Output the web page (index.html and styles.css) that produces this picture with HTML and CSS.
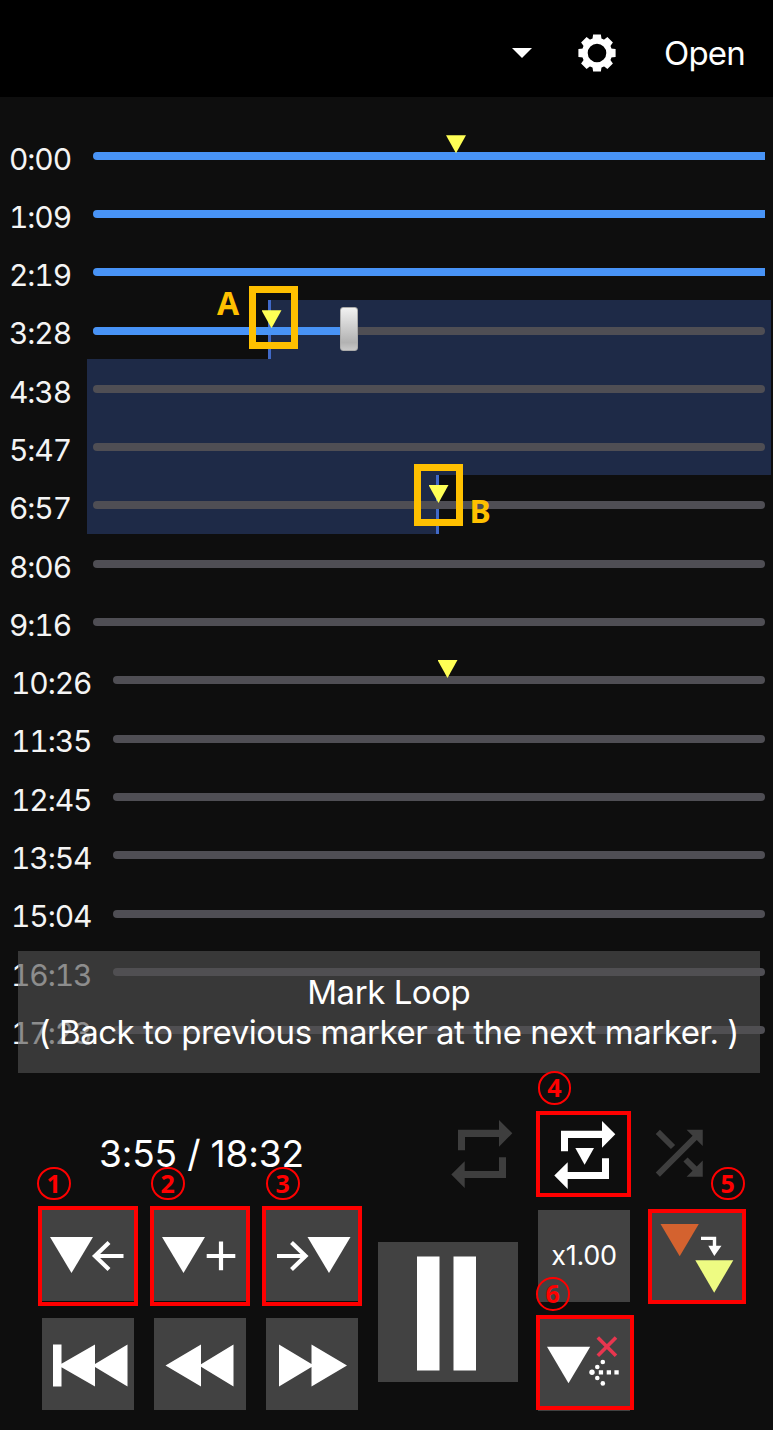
FILE: index.html
```
<!DOCTYPE html>
<html lang="en">
<head>
<meta charset="utf-8">
<title>Mark Loop</title>
<link rel="stylesheet" href="styles.css">
</head>
<body>
<header class="topbar">
  <svg class="caret" viewBox="0 0 20 10"><path d="M0 0H20L10 10Z"/></svg>
  <svg class="gear" viewBox="-19 -19 38 38">
    <circle r="12.2" fill="none" stroke="#fff" stroke-width="5.8"/>
    <g id="teeth"><path d="M-4.600-13.500L-3.900-18.600H3.900L4.600-13.500ZM-4.600 13.500L-3.900 18.600H3.900L4.600 13.500ZM-13.500-4.600L-18.600-3.900V3.900L-13.500 4.600ZM13.500-4.600L18.600-3.900V3.900L13.500 4.600Z"/></g>
    <use href="#teeth" transform="rotate(45)"/>
  </svg>
  <span class="open">Open</span>
</header>

<main class="timeline">
  <div class="row"><span class="time">0:00</span><div class="track played"></div><i class="marker m1"></i></div>
  <div class="row"><span class="time">1:09</span><div class="track played"></div></div>
  <div class="row"><span class="time">2:19</span><div class="track played"></div></div>
  <div class="row"><i class="range range-start"></i><i class="edge edge-a"></i><span class="time">3:28</span><div class="track"><div class="fill"></div></div><i class="thumb"></i><i class="marker m2"></i><i class="frame frame-a"></i><b class="letter letter-a">A</b></div>
  <div class="row"><i class="range"></i><span class="time">4:38</span><div class="track"></div></div>
  <div class="row"><i class="range"></i><span class="time">5:47</span><div class="track"></div></div>
  <div class="row"><i class="range range-end"></i><i class="edge edge-b"></i><span class="time">6:57</span><div class="track"></div><i class="marker m3"></i><i class="frame frame-b"></i><b class="letter letter-b">B</b></div>
  <div class="row"><span class="time">8:06</span><div class="track"></div></div>
  <div class="row"><span class="time">9:16</span><div class="track"></div></div>
  <div class="row long"><span class="time">10:26</span><div class="track"></div><i class="marker m4"></i></div>
  <div class="row long"><span class="time">11:35</span><div class="track"></div></div>
  <div class="row long"><span class="time">12:45</span><div class="track"></div></div>
  <div class="row long"><span class="time">13:54</span><div class="track"></div></div>
  <div class="row long"><span class="time">15:04</span><div class="track"></div></div>
  <div class="row long"><span class="time">16:13</span><div class="track"></div></div>
  <div class="row long"><span class="time">17:23</span><div class="track"></div></div>
  <div class="toast"><p class="toast-title">Mark Loop</p><p class="toast-text">( Back to previous marker at the next marker. )</p></div>
</main>

<footer class="controls">
  <section class="left">
    <div class="position"><span>3:55 / 18:32</span></div>
    <div class="pad">
      <div class="btn"><svg viewBox="0 0 92 92"><path d="M8 28H51L29.5 64Z"/><path class="line" d="M81.5 47H52M67 33.5L53 47L67 60.5"/></svg><i class="box"></i><b class="num n1">1</b></div>
      <div class="btn"><svg viewBox="0 0 92 92"><path d="M8 28H51L29.5 64Z"/><path class="line" d="M52.7 47H81.3M67 32.5V61.2"/></svg><i class="box"></i><b class="num n2">2</b></div>
      <div class="btn"><svg viewBox="0 0 92 92"><path d="M41.5 28H84.5L63 64Z"/><path class="line" d="M11 47H40.500M25.500 33.500L39.500 47L25.500 60.500"/></svg><i class="box"></i><b class="num n3">3</b></div>
      <div class="btn"><svg viewBox="0 0 92 92"><path d="M11 26.500H19.500V45.800L53 26.500V46L85.500 26.500V68.500L53 49V68.500L19.500 49.200V68.500H11Z"/></svg></div>
      <div class="btn"><svg viewBox="0 0 92 92"><path d="M11.500 47.500L47 26.500V46.300L79.500 26.500V68.500L47 48.700V68.500Z"/></svg></div>
      <div class="btn"><svg viewBox="0 0 92 92"><path d="M13 26.500L45.500 46V26.500L81 47.500L45.500 68.500V49L13 68.500Z"/></svg></div>
    </div>
  </section>

  <div class="btn pause"><svg viewBox="0 0 140 140"><path d="M39 14.500H61.500V128.500H39ZM75.500 14.500H98V128.500H75.500Z"/></svg></div>

  <section class="right">
    <div class="modes">
      <svg class="loop" viewBox="0 0 64 70"><path id="loop" d="M8 10.700H49V1L62.300 14.300L49 27.700V18H15V31.300H8ZM56 38.300H49V52H14.700V42.300L1.300 55.600L14.700 69V59H56Z"/></svg>
      <div class="markloop"><svg viewBox="0 0 64 70"><use href="#loop"/><path d="M22.300 28H41L31.600 44.700Z"/></svg><i class="box box4"></i><b class="num n4">4</b></div>
      <svg class="shuffle" viewBox="0 0 24 24"><path d="M10.590 9.170L5.410 4 4 5.410l5.170 5.170 1.420-1.410zM14.500 4l2.040 2.040L4 18.590 5.410 20 17.960 7.460 20 9.500V4h-5.500zm.33 9.410l-1.410 1.410 3.130 3.130L14.500 20H20v-5.500l-2.040 2.040-3.130-3.130z"/></svg>
    </div>
    <div class="pad pad-right">
      <div class="btn"><span class="speed">x1.00</span></div>
      <div class="btn"><svg viewBox="0 0 92 92"><path fill="#d4622f" d="M10.500 14H48.800L29.700 46.300Z"/><path fill="#eefb82" d="M45.300 50.300H83.300L64.200 82.700Z"/><path d="M51 26.700H66.200V35.700H71.500L64.300 46L58.300 35.700H62.800V29.900H51Z"/></svg><i class="box box5"></i><b class="num n5">5</b></div>
      <div class="btn"><svg viewBox="0 0 92 92"><path d="M9 27.700H52.200L30.500 64.200Z"/><path d="M59.800 18.500L78 36.800M78 18.500L59.800 36.800" stroke="#e8364f" stroke-width="3.600"/><circle cx="54" cy="53.300" r="2.700"/><circle cx="59.300" cy="48" r="2.300"/><circle cx="59.300" cy="59" r="2.300"/><circle cx="64.800" cy="43" r="2.300"/><circle cx="64.800" cy="64.400" r="2.300"/><path d="M60.800 51.200h4.300v4.300h-4.300ZM68.700 51.200h4.300v4.300h-4.300ZM76.400 51.200h4.300v4.300h-4.300Z"/></svg><i class="box box6"></i><b class="num n6">6</b></div>
    </div>
  </section>
</footer>
</body>
</html>
```

FILE: styles.css
```
* { box-sizing: border-box; }
body {
  margin: 0;
  width: 773px;
  height: 1430px;
  overflow: hidden;
  background: #0e0e0e;
  color: #fff;
  font-family: Inter, "Noto Sans", sans-serif;
  font-weight: 400;
}
svg { display: block; fill: #fff; overflow: visible; }
p { margin: 0; }

.topbar {
  display: flex;
  align-items: center;
  justify-content: flex-end;
  height: 97px;
  padding: 8px 27px 0 0;
  background: #000;
}
.caret { width: 20px; height: 10px; margin-right: 46px; }
.gear { width: 38px; height: 38px; margin-right: 48px; }
.open { font-size: 33px; letter-spacing: -0.8px; width: 82px; padding-top: 1px; white-space: nowrap; }

.timeline { position: relative; height: 1013px; padding-top: 28.5px; }
.row {
  position: relative;
  display: grid;
  grid-template-columns: 84px 672px;
  height: 58.3px;
  padding-left: 9px;
}
.row.long { grid-template-columns: 102px 652px; padding-left: 11px; }
.time {
  position: relative;
  margin-top: 4px;
  font-size: 30px;
  line-height: 58.3px;
  letter-spacing: -1.1px;
  font-variant-numeric: tabular-nums;
  color: #f4f4f4;
  white-space: nowrap;
}
.track {
  position: relative;
  height: 8px;
  margin-top: 26.2px;
  border-radius: 4px;
  background: #4f4e54;
}
.track.played { background: #4893f6; border-radius: 4px 0 0 4px; }
.fill { width: 250px; height: 8px; border-radius: 4px 0 0 4px; background: #4893f6; }
.range { position: absolute; left: 87px; right: 2px; top: 0; height: 58.5px; background: #1e2a47; }
.range-start { left: 270px; }
.range-end { right: 336px; }
.edge { position: absolute; top: 0; width: 3px; height: 58.3px; background: #4069c8; }
.edge-a { left: 268px; }
.edge-b { left: 435.5px; }
.marker {
  position: absolute;
  top: 9.8px;
  width: 20px;
  height: 18px;
  background: #ffff55;
  clip-path: polygon(0 0, 100% 0, 50% 100%);
}
.m1 { left: 446px; }
.m2 { left: 261.500px; }
.m3 { left: 428.500px; }
.m4 { left: 437.500px; }
.thumb {
  position: absolute;
  left: 340px;
  top: 7px;
  width: 17.5px;
  height: 43.5px;
  border: 1px solid #aaa;
  border-radius: 3px;
  background: linear-gradient(#f1f1f1, #b2b2b2 82%, #c8c8c8);
}
.frame { position: absolute; border: 7px solid #ffc000; width: 49px; height: 62.5px; }
.frame-a { left: 248.5px; top: -14.4px; }
.frame-b { left: 414px; top: -11.3px; }
.letter {
  position: absolute;
  font: bold 32px/32px "Noto Sans", sans-serif;
  color: #ffc000;
}
.letter-a { left: 217px; top: -13px; }
.letter-b { left: 469.5px; top: 20px; }

.toast {
  position: absolute;
  left: 18px;
  top: 854px;
  width: 741.5px;
  height: 122px;
  padding-top: 21px;
  background: rgba(81, 81, 81, 0.63);
  font-size: 33px;
  line-height: 40px;
  letter-spacing: -0.45px;
  text-align: center;
  white-space: nowrap;
}

.controls { display: flex; gap: 20px; padding-left: 42px; }
.left { width: 316px; }
.position {
  height: 99px;
  padding: 19px 0 0 57px;
  font-size: 37px;
  line-height: 50px;
  letter-spacing: -0.15px;
  white-space: nowrap;
}
.pad { display: grid; grid-template-columns: repeat(3, 92px); gap: 17px 20px; }
.pad-right { grid-template-columns: repeat(2, 92px); }
.btn { position: relative; width: 92px; height: 92px; background: #424242; }
.btn svg { width: 100%; height: 100%; }
.line { fill: none; stroke: #fff; stroke-width: 4.2; }
.pause { width: 140px; height: 140px; margin-top: 132px; }
.modes { display: flex; height: 99.500px; margin-left: -88px; }
.loop { width: 64px; height: 70px; margin-top: 9px; fill: #3e3e3e; }
.markloop { position: relative; width: 64px; height: 70px; margin: 10px 0 0 39px; }
.shuffle { width: 70.500px; height: 70.500px; margin: 8.300px 0 0 27px; fill: #3e3e3e; }
.speed { display: block; font-size: 27px; line-height: 92px; letter-spacing: -0.3px; text-align: center; }

.box { position: absolute; left: -4px; top: -3.500px; width: 100px; height: 100px; border: 4px solid #f00; }
.box4 { left: -17px; top: -9px; width: 95px; height: 86px; }
.box5 { left: -2px; top: -0.500px; width: 97.500px; height: 95px; }
.box6 { left: -2px; top: -3.500px; width: 98px; height: 95px; }
.num {
  position: absolute;
  width: 33.500px;
  height: 33.500px;
  border: 2px solid #f00;
  border-radius: 50%;
  font: bold 25px/28px "Noto Sans", sans-serif;
  text-align: center;
  color: #f00;
}
.n1 { left: -5px; top: -42.5px; }
.n2 { left: -3px; top: -42.5px; }
.n3 { left: 0; top: -42.5px; }
.n4 { left: -15.3px; top: -48.6px; }
.n5 { left: 61px; top: -43px; }
.n6 { left: -2px; top: -41.500px; }
```
